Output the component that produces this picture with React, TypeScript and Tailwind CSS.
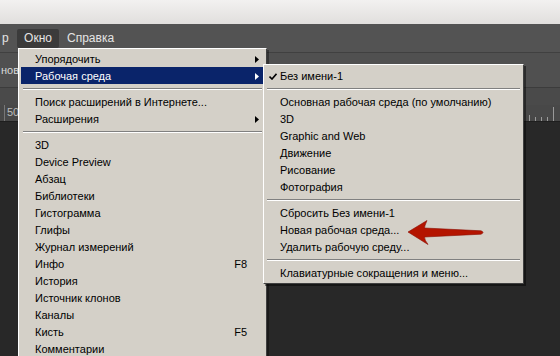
import { Fragment } from "react";

type Item =
  | { kind: "sep" }
  | { kind: "item"; label: string; sub?: boolean; key?: string; active?: boolean; checked?: boolean };

const mainItems: Item[] = [
  { kind: "item", label: "Упорядочить", sub: true },
  { kind: "item", label: "Рабочая среда", sub: true, active: true },
  { kind: "sep" },
  { kind: "item", label: "Поиск расширений в Интернете..." },
  { kind: "item", label: "Расширения", sub: true },
  { kind: "sep" },
  { kind: "item", label: "3D" },
  { kind: "item", label: "Device Preview" },
  { kind: "item", label: "Абзац" },
  { kind: "item", label: "Библиотеки" },
  { kind: "item", label: "Гистограмма" },
  { kind: "item", label: "Глифы" },
  { kind: "item", label: "Журнал измерений" },
  { kind: "item", label: "Инфо", key: "F8" },
  { kind: "item", label: "История" },
  { kind: "item", label: "Источник клонов" },
  { kind: "item", label: "Каналы" },
  { kind: "item", label: "Кисть", key: "F5" },
  { kind: "item", label: "Комментарии" },
];

const subItems: Item[] = [
  { kind: "item", label: "Без имени-1", checked: true },
  { kind: "sep" },
  { kind: "item", label: "Основная рабочая среда (по умолчанию)" },
  { kind: "item", label: "3D" },
  { kind: "item", label: "Graphic and Web" },
  { kind: "item", label: "Движение" },
  { kind: "item", label: "Рисование" },
  { kind: "item", label: "Фотография" },
  { kind: "sep" },
  { kind: "item", label: "Сбросить Без имени-1" },
  { kind: "item", label: "Новая рабочая среда..." },
  { kind: "item", label: "Удалить рабочую среду..." },
  { kind: "sep" },
  { kind: "item", label: "Клавиатурные сокращения и меню..." },
];

function Arrow({ white }: { white?: boolean }) {
  return (
    <svg width="4" height="7" viewBox="0 0 4 7" className="mb-[1px] shrink-0">
      <path d="M0 0 L4 3.5 L0 7 Z" fill={white ? "#ffffff" : "#000000"} />
    </svg>
  );
}

function Check() {
  return (
    <svg width="8" height="7" viewBox="0 0 8 7">
      <path d="M0.5 3.5 L3 6 L7.5 0.8" stroke="#000" strokeWidth="1.6" fill="none" />
    </svg>
  );
}

function MenuRows({ items, textLeft }: { items: Item[]; textLeft: string }) {
  return (
    <>
      {items.map((it, i) =>
        it.kind === "sep" ? (
          <div key={i} className="flex h-[9px] flex-col justify-center px-[2px]">
            <div className="h-px bg-[#808080]" />
            <div className="h-px bg-white" />
          </div>
        ) : (
          <div
            key={i}
            className={`relative flex h-[17px] items-center pt-[2px] pr-[5px] ${
              it.active ? "bg-[#0a246a] text-white" : "text-black"
            } ${textLeft}`}
          >
            {it.checked && (
              <span className="absolute left-[4px] top-[6px]">
                <Check />
              </span>
            )}
            <span className="flex-1 whitespace-nowrap">{it.label}</span>
            {it.key && <span className="mr-[12px]">{it.key}</span>}
            {it.sub && <Arrow white={it.active} />}
          </div>
        )
      )}
    </>
  );
}

export default function App() {
  return (
    <div className="relative h-[356px] w-[560px] overflow-hidden bg-[#282828] font-['Liberation_Sans',Arial,sans-serif] text-[11px] leading-none">
      {/* window title strip */}
      <div className="h-[24px] bg-gradient-to-b from-[#f2f1f0] to-[#e1dfdd]" />

      {/* menubar */}
      <div className="flex h-[28px] items-center bg-[#535353] text-[12px] text-[#e4e4e4]">
        <span className="ml-[2px] w-[15px]">р</span>
        <span className="flex h-[19px] w-[42px] items-center justify-center rounded-[2px] bg-[#3b3b3b]">Окно</span>
        <span className="ml-[8px]">Справка</span>
      </div>

      {/* options bar */}
      <div className="flex h-[35px] items-center border-t border-[#404040] bg-[#505050] text-[#d8d8d8]">
        <span className="ml-[1px]">нов</span>
      </div>

      {/* panel tabs */}
      <div className="h-[18px] border-t border-[#3c3c3c] bg-[#4a4a4a]" />

      {/* ruler */}
      <div className="flex h-[17px] items-end border-b border-[#1e1e1e] bg-[#484848] text-[#bdbdbd]">
        <div className="h-full w-[5px] border-r border-[#777]" />
        <span className="mb-[3px] ml-[2px] text-[11px]">50</span>
        <div className="ml-auto flex items-end gap-[5px] pr-[6px]">
          {[4, 4, 6, 4, 4, 4, 14].map((h, i) => (
            <Fragment key={i}>
              <div className="w-px bg-[#9a9a9a]" style={{ height: h }} />
            </Fragment>
          ))}
        </div>
      </div>

      {/* main dropdown */}
      <div className="absolute left-[18px] top-[48px] w-[249px] border border-t-white border-l-white border-r-[#404040] border-b-[#404040] bg-[#d4d0c8] py-[1px] px-[2px] shadow-[2px_2px_0_rgba(0,0,0,0.35)]">
        <MenuRows items={mainItems} textLeft="pl-[14px]" />
      </div>

      {/* workspace submenu */}
      <div className="absolute left-[263px] top-[64px] w-[261px] border border-t-white border-l-white border-r-[#404040] border-b-[#404040] bg-[#d4d0c8] px-[1px] pt-[2px] pb-[2px] shadow-[2px_2px_0_rgba(0,0,0,0.45)]">
        <MenuRows items={subItems} textLeft="pl-[15px]" />
      </div>

      {/* red pointer arrow */}
      <svg className="absolute left-[400px] top-[215px]" width="90" height="36" viewBox="400 215 90 36">
        <path
          d="M408 232 L427 220.5 Q424.5 226 424.5 228 L481 230.8 Q485 232.5 481 234.2 L424.5 237 Q424.5 240 428 244.5 Z"
          fill="#b41400"
          stroke="#8a0c00"
          strokeWidth="0.6"
          strokeLinejoin="round"
        />
      </svg>
    </div>
  );
}
